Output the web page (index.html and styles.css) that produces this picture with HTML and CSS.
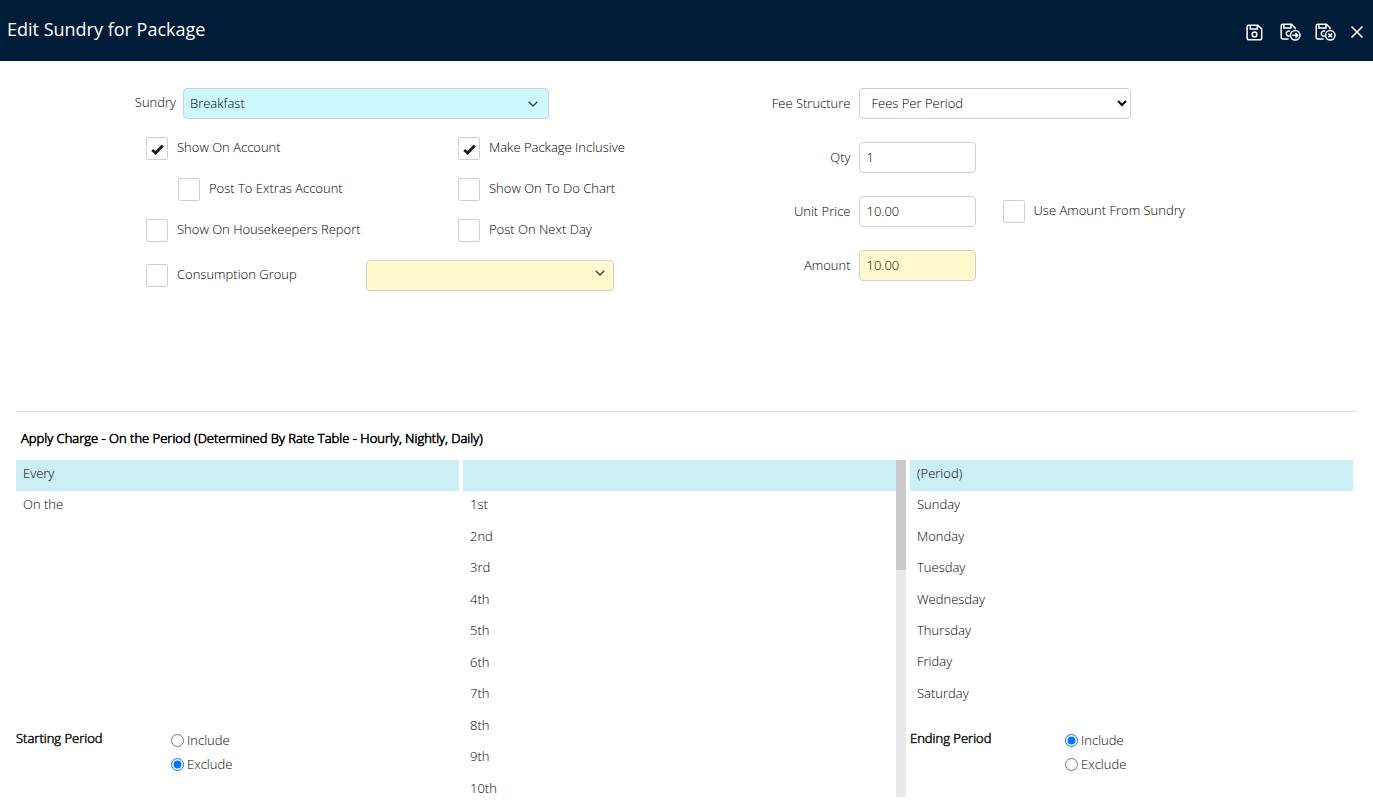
FILE: index.html
```html
<!DOCTYPE html>
<html lang="en">
<head>
<meta charset="utf-8">
<title>Edit Sundry for Package</title>
<link rel="stylesheet" href="styles.css">
</head>
<body>
<header class="topbar">
  <h1 class="topbar-title">Edit Sundry for Package</h1>
  <div class="toolbar">
    <button class="tool" type="button" aria-label="Save">
      <svg width="17" height="17" viewBox="0 0 18 18"><path d="M3 1.2h9.6l4 4V15a1.8 1.8 0 0 1-1.8 1.8H3A1.8 1.8 0 0 1 1.2 15V3A1.8 1.8 0 0 1 3 1.2zM4.5 1.2v4h7.5v-4"/><circle cx="9" cy="11" r="2.5"/></svg>
    </button>
    <button class="tool" type="button" aria-label="Save and continue">
      <svg width="21" height="18" viewBox="0 0 22 19"><path d="M9 16.8H3A1.8 1.8 0 0 1 1.2 15V3A1.8 1.8 0 0 1 3 1.2h9l3.8 4v1.3M4 1.2v4h7.5v-4M10.5 8.9a2.6 2.6 0 1 0-.3 4.6"/><circle cx="16" cy="13" r="5"/><path d="M13 13h5.4M16.2 10.6l2.4 2.4-2.4 2.4"/></svg>
    </button>
    <button class="tool" type="button" aria-label="Save and close">
      <svg width="21" height="18" viewBox="0 0 22 19"><path d="M9 16.8H3A1.8 1.8 0 0 1 1.2 15V3A1.8 1.8 0 0 1 3 1.2h9l3.8 4v1.3M4 1.2v4h7.5v-4M10.5 8.9a2.6 2.6 0 1 0-.3 4.6"/><circle cx="16" cy="13" r="5"/><path d="M14 11l4 4M18 11l-4 4"/></svg>
    </button>
    <button class="tool" type="button" aria-label="Close">
      <svg width="14" height="14" viewBox="0 0 14 14"><path d="M1.5 1.5l11 11M12.5 1.5l-11 11"/></svg>
    </button>
  </div>
</header>

<main>
  <form class="sundry-form">
    <div class="form-left">
      <div class="sundry-row">
        <label for="sundry">Sundry</label>
        <select id="sundry" class="field combo combo-required"><option>Breakfast</option></select>
      </div>
      <div class="checks">
        <label class="check"><input type="checkbox" checked>Show On Account</label>
        <label class="check"><input type="checkbox" checked>Make Package Inclusive</label>
        <label class="check check-nested"><input type="checkbox">Post To Extras Account</label>
        <label class="check"><input type="checkbox">Show On To Do Chart</label>
        <label class="check"><input type="checkbox">Show On Housekeepers Report</label>
        <label class="check"><input type="checkbox">Post On Next Day</label>
        <div class="group-row">
          <label class="check"><input type="checkbox">Consumption Group</label>
          <select class="field combo combo-optional" aria-label="Consumption Group value"><option></option></select>
        </div>
      </div>
    </div>
    <div class="form-right">
      <label for="fee">Fee Structure</label>
      <div><select id="fee" class="field fee-select"><option>Fees Per Period</option></select></div>
      <label for="qty">Qty</label>
      <div><input id="qty" class="field amount" type="text" value="1"></div>
      <label for="price">Unit Price</label>
      <div class="price-row">
        <input id="price" class="field amount" type="text" value="10.00">
        <label class="check"><input type="checkbox">Use Amount From Sundry</label>
      </div>
      <label for="amount">Amount</label>
      <div><input id="amount" class="field amount amount-total" type="text" value="10.00"></div>
    </div>
  </form>

  <section class="charge">
    <h2 class="charge-title">Apply Charge - On the Period (Determined By Rate Table - Hourly, Nightly, Daily)</h2>
    <div class="charge-columns">
      <div>
        <ul class="options" role="listbox" aria-label="Frequency">
          <li class="selected" role="option" aria-selected="true">Every</li>
          <li role="option">On the</li>
        </ul>
        <fieldset class="period">
          <legend class="period-title">Starting Period</legend>
          <div class="period-choices">
            <label><input type="radio" name="start">Include</label>
            <label><input type="radio" name="start" checked>Exclude</label>
          </div>
        </fieldset>
      </div>
      <div class="scroller">
        <ul class="options options-long" role="listbox" aria-label="Occurrence">
          <li class="selected" role="option" aria-selected="true"></li>
          <li role="option">1st</li>
          <li role="option">2nd</li>
          <li role="option">3rd</li>
          <li role="option">4th</li>
          <li role="option">5th</li>
          <li role="option">6th</li>
          <li role="option">7th</li>
          <li role="option">8th</li>
          <li role="option">9th</li>
          <li role="option">10th</li>
        </ul>
        <div class="track"><div class="thumb"></div></div>
      </div>
      <div>
        <ul class="options" role="listbox" aria-label="Day">
          <li class="selected" role="option" aria-selected="true">(Period)</li>
          <li role="option">Sunday</li>
          <li role="option">Monday</li>
          <li role="option">Tuesday</li>
          <li role="option">Wednesday</li>
          <li role="option">Thursday</li>
          <li role="option">Friday</li>
          <li role="option">Saturday</li>
        </ul>
        <fieldset class="period">
          <legend class="period-title">Ending Period</legend>
          <div class="period-choices">
            <label><input type="radio" name="end" checked>Include</label>
            <label><input type="radio" name="end">Exclude</label>
          </div>
        </fieldset>
      </div>
    </div>
  </section>
</main>
</body>
</html>
```

FILE: styles.css
```css
* { box-sizing: border-box; }

body {
  margin: 0;
  background: #fff;
  color: #000;
  font: 300 13px/20px "Open Sans", "Noto Sans", sans-serif;
}

/* Header */
.topbar {
  display: flex;
  justify-content: space-between;
  height: 61px;
  padding: 0 9px 0 7px;
  background: #001c38;
  color: #fff;
}

.topbar-title {
  margin: 0;
  font-size: 18px;
  font-weight: 400;
  line-height: 58px;
}

.toolbar {
  display: flex;
  align-items: center;
  gap: 14px;
  padding-top: 3px;
}

.tool {
  display: flex;
  padding: 0;
  border: 0;
  background: none;
  cursor: pointer;
}

.tool:first-child { margin-right: 3px; }

.tool svg {
  fill: none;
  stroke: #fff;
  stroke-width: 1.6;
}

/* Form */
.sundry-form {
  display: grid;
  grid-template-columns: 1fr 1fr;
  min-height: 350px;
  padding-top: 27px;
}

.field {
  height: 31px;
  margin: 0;
  padding: 0 7px 2px;
  border: 1px solid #d0d0d0;
  border-radius: 4px;
  background-color: #fff;
  color: inherit;
  font: inherit;
}

.sundry-row {
  display: grid;
  grid-template-columns: 176px 1fr;
  column-gap: 7px;
  padding-right: 138px;
}

.sundry-row label {
  line-height: 29px;
  text-align: right;
}

.combo {
  padding-left: 6px;
  appearance: none;
  background-image: url("data:image/svg+xml,%3Csvg xmlns='http://www.w3.org/2000/svg' width='10' height='6' fill='none' stroke='%23444' stroke-width='1.4'%3E%3Cpath d='M.7.7 5 5 9.3.7'/%3E%3C/svg%3E");
  background-repeat: no-repeat;
  background-position: right 10px center;
}

.combo-required { background-color: #cdf8fd; }

.combo-optional {
  width: 248px;
  background-color: #fff9cd;
  background-position: right 8px top 9px;
}

.checks {
  display: grid;
  grid-template-columns: 312px 1fr;
  row-gap: 18px;
  padding: 18px 0 0 146px;
}

.check {
  display: flex;
  gap: 9px;
  line-height: 21px;
}

.check-nested { padding-left: 32px; }

.check input {
  width: 22px;
  height: 23px;
  margin: 0;
  border: 1px solid #d0d0d0;
  border-radius: 2px;
  background: #fff;
  appearance: none;
}

.check input:checked {
  background: url("data:image/svg+xml,%3Csvg xmlns='http://www.w3.org/2000/svg' width='13' height='11' fill='none' stroke='%23222' stroke-width='3'%3E%3Cpath d='M1.2 6 4.6 9 11.8 1.5'/%3E%3C/svg%3E") center 6px no-repeat;
}

.group-row {
  display: flex;
  align-items: center;
  grid-column: 1 / -1;
}

.group-row .check { width: 220px; }

.form-right {
  display: grid;
  grid-template-columns: 164px 1fr;
  grid-auto-rows: 31px;
  gap: 23px 8px;
  align-content: start;
}

.form-right > label {
  line-height: 31px;
  text-align: right;
}

.fee-select {
  width: 272px;
  padding-right: 0;
  padding-left: 8px;
}

.amount { width: 117px; }
.amount-total { background-color: #fff9cd; }

.price-row {
  display: flex;
  align-items: center;
  gap: 27px;
}

/* Charge lists */
.charge {
  margin: 0 16px;
  border-top: 1px solid #d8d8d8;
}

.charge-title {
  margin: 0;
  padding: 16px 5px 12px;
  font-size: 13px;
  font-weight: 300;
  -webkit-text-stroke: 0.6px currentColor;
}

.charge-columns {
  display: grid;
  grid-template-columns: repeat(3, 1fr);
  gap: 4px;
  padding-right: 4px;
}

.options {
  display: grid;
  grid-template-rows: repeat(8, 1fr);
  height: 251px;
  margin: 0;
  padding: 0;
  list-style: none;
}

.options li {
  padding: 0 7px;
  line-height: 27px;
}

.options .selected { background: #cceef5; }

.options-long {
  flex: 1;
  grid-template-rows: repeat(11, 1fr);
  height: 346px;
}

.scroller {
  display: flex;
  height: 337px;
  overflow: hidden;
}

.track {
  width: 10px;
  background: #e8e8e8;
}

.thumb {
  height: 110px;
  background: #cacaca;
}

.period {
  display: flex;
  margin: 0;
  padding: 17px 0 0;
  border: 0;
}

.period-title {
  float: left;
  width: 155px;
  padding: 0;
  color: #222;
  -webkit-text-stroke: 0.6px currentColor;
}

.period-choices label {
  display: flex;
  align-items: center;
  gap: 3px;
  height: 24px;
}

.period-choices input {
  width: 13px;
  height: 13px;
  margin: 0;
}
```
